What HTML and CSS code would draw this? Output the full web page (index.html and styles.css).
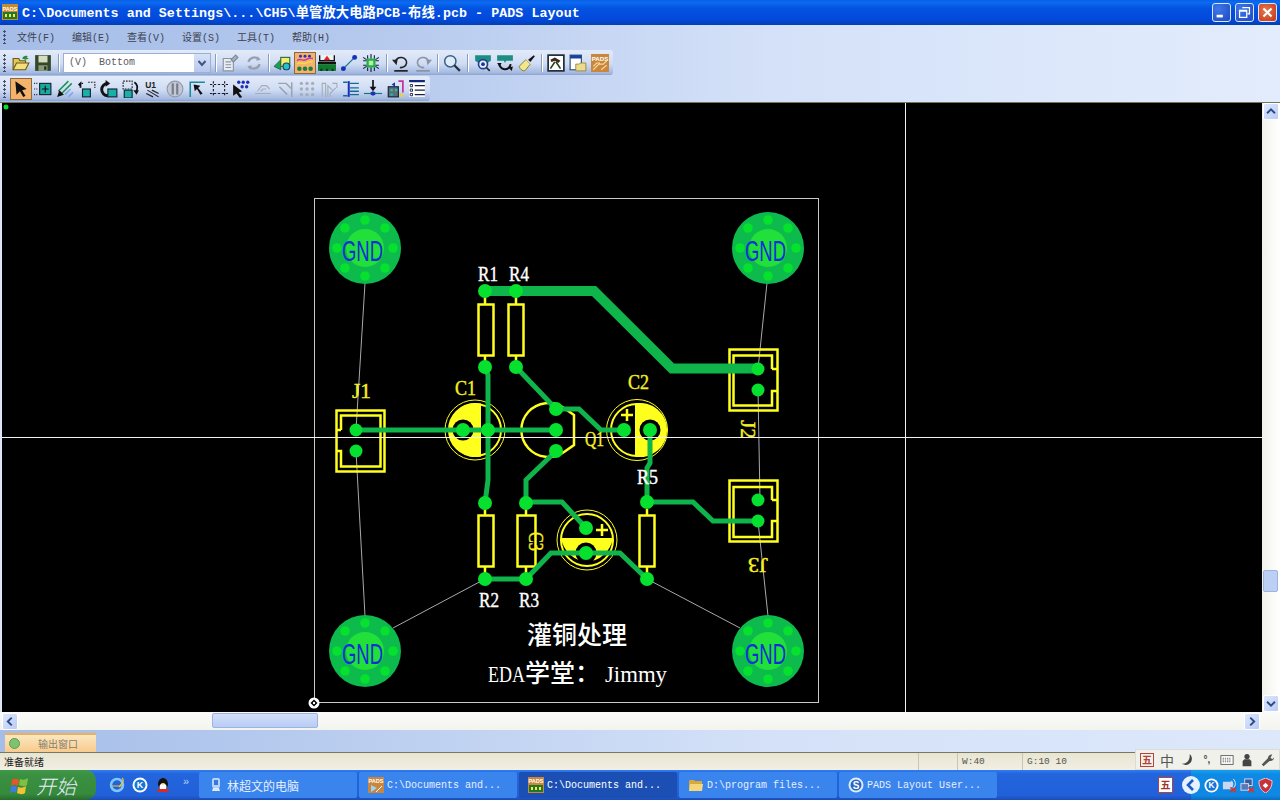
FILE: index.html
```html
<!DOCTYPE html>
<html lang="zh">
<head>
<meta charset="utf-8">
<title>PADS Layout</title>
<link rel="stylesheet" href="styles.css">
</head>
<body>
<div class="app">
  <header class="titlebar">
    <svg class="appicon" viewBox="0 0 16 16"><rect width="16" height="16" fill="#c98a2e"/><rect x="1" y="8" width="14" height="7" fill="#1d7a2a"/><rect x="3" y="10" width="2" height="3" fill="#ffe24a"/><rect x="7" y="10" width="2" height="3" fill="#ffe24a"/><rect x="11" y="10" width="2" height="3" fill="#ffe24a"/><text x="8" y="6.500" class="padsmini">PADS</text></svg>
    <span class="titletext">C:\Documents and Settings\...\CH5\单管放大电路PCB-布线.pcb - PADS Layout</span>
    <div class="winbtns">
      <span class="winbtn"><svg viewBox="0 0 19 19"><rect x="4" y="12" width="7" height="3" fill="#fff"/></svg></span>
      <span class="winbtn"><svg viewBox="0 0 19 19"><path d="M7 4h8v7h-2M4 7h8v8H4z M4 8h8" fill="none" stroke="#fff" stroke-width="1.400"/></svg></span>
      <span class="winbtn close"><svg viewBox="0 0 19 19"><path d="M5 5l9 9M14 5l-9 9" stroke="#fff" stroke-width="2.400"/></svg></span>
    </div>
  </header>

  <div class="chrome">
    <nav class="menubar">
      <i class="grip"></i>
      <span class="menu">文件(F)</span><span class="menu">编辑(E)</span><span class="menu">查看(V)</span><span class="menu">设置(S)</span><span class="menu">工具(T)</span><span class="menu">帮助(H)</span>
    </nav>

    <div class="toolbar tb1">
      <i class="grip"></i>
      <span class="tool"><svg viewBox="0 0 16 16"><path d="M1 14V4h5l1 2h5v2" fill="#e3c65a" stroke="#6b5a18"/><path d="M1 14l3-6h11l-3 6z" fill="#f3df7c" stroke="#6b5a18"/><path d="M9 4c1-2 3-3 5-2l-1 1 2 1-3 1z" fill="#2c8a3a"/></svg></span>
      <span class="tool"><svg viewBox="0 0 16 16"><rect x="1" y="1" width="14" height="14" fill="#33482c"/><rect x="4" y="1.500" width="8" height="6" fill="#d7dcc0"/><rect x="4" y="10" width="8" height="5" fill="#8d9a78"/><rect x="9" y="11" width="2" height="3" fill="#22301c"/></svg></span>
      <i class="sep s9"></i>
      <div class="combo"><span class="combotext">(V)&nbsp; Bottom</span><span class="comboarrow"><svg viewBox="0 0 12 12"><path d="M2.500 4l3.500 4 3.500-4" fill="none" stroke="#44557e" stroke-width="2"/></svg></span></div>
      <i class="sep s8"></i>
      <span class="tool"><svg viewBox="0 0 16 16"><path d="M2 4h9v11H2z" fill="#e8ecf3" stroke="#8b93a3"/><path d="M4 7h5M4 9.500h5M4 12h5" stroke="#8b93a3"/><path d="M9 5l4-4 2 2-4 4z" fill="#aab2c0" stroke="#7e8695"/></svg></span>
      <span class="tool gapl"><svg viewBox="0 0 16 16"><path d="M3 7a5.500 5.500 0 0 1 9.500-2M13 9a5.500 5.500 0 0 1-9.500 2" fill="none" stroke="#98a0ae" stroke-width="2"/><path d="M11 2l3 3-4 1zM5 14l-3-3 4-1z" fill="#98a0ae"/></svg></span>
      <i class="sep s7"></i>
      <span class="tool"><svg viewBox="0 0 16 16"><path d="M0 11l6-6v9z" fill="#14a34b" stroke="#124" stroke-width=".5"/><rect x="6" y="3" width="8" height="8" fill="#f2ee70" stroke="#2a6d3a"/><circle cx="11" cy="11" r="3" fill="#25c0c8" stroke="#146"/></svg></span>
      <span class="tool on"><svg viewBox="0 0 16 16"><g fill="#2b2fb6"><circle cx="4" cy="2" r="1.300"/><circle cx="8" cy="2" r="1.300"/><circle cx="12" cy="2" r="1.300"/></g><path d="M1 6c3-3 5 1 8-1s4-1 6-1" fill="none" stroke="#c23bb5" stroke-width="1.200"/><path d="M1 9c3-3 5 1 8-1s4-1 6-1" fill="none" stroke="#f0e040" stroke-width="1.200"/><g fill="#1c7d3c"><circle cx="3" cy="13" r="2"/><circle cx="8" cy="13" r="2"/><circle cx="13" cy="13" r="2"/></g></svg></span>
      <span class="tool"><svg viewBox="0 0 16 16"><path d="M1.500 1v5h13V1" fill="#eef3f5" stroke="#111" stroke-width="1.200"/><path d="M8 1.500l3 4H5z" fill="#d9262a"/><rect x="0" y="7" width="16" height="2" fill="#111"/><rect x="0" y="9" width="16" height="6" fill="#127a30"/><path d="M2 13h2v2H2zM7 13h2v2H7zM12 13h2v2h-2z" fill="#0d3a1c"/></svg></span>
      <span class="tool"><svg viewBox="0 0 16 16"><path d="M3 13L13 3" stroke="#1f7a96" stroke-width="1.200"/><circle cx="3" cy="13" r="2.200" fill="#1330b8"/><circle cx="13" cy="3" r="2.200" fill="#1330b8"/></svg></span>
      <span class="tool"><svg viewBox="0 0 16 16"><rect x="4" y="4" width="8" height="8" fill="#23b04a"/><path d="M1 3l3 2M1 6h3M1 10h3M1 13l3-2M15 3l-3 2M15 6h-3M15 10h-3M15 13l-3-2M5 1v3M8 0v4M11 1v3M5 15v-3M8 16v-4M11 15v-3" stroke="#13263a"/><path d="M6 6h4v4H6z" fill="#b8f0a0"/></svg></span>
      <i class="sep s8"></i>
      <span class="tool"><svg viewBox="0 0 16 16"><path d="M3 7a5 4.500 0 1 1 4 5" fill="none" stroke="#222" stroke-width="1.400"/><path d="M0 5l5 0-1 5z" fill="#222"/><path d="M2 15h12" stroke="#222" stroke-width="1.500"/></svg></span>
      <span class="tool"><svg viewBox="0 0 16 16"><path d="M13 7a5 4.500 0 1 0-4 5" fill="none" stroke="#8b93a3" stroke-width="1.400"/><path d="M16 5h-5l1 5z" fill="#8b93a3"/><path d="M2 15h12" stroke="#8b93a3" stroke-width="1.500"/></svg></span>
      <i class="sep s7"></i>
      <span class="tool"><svg viewBox="0 0 16 16"><circle cx="6.500" cy="6.500" r="5" fill="#dcecf8" stroke="#3b5f86" stroke-width="1.300"/><path d="M10 10l5 5" stroke="#26303f" stroke-width="2"/></svg></span>
      <i class="sep s9"></i>
      <span class="tool"><svg viewBox="0 0 16 16"><path d="M1 1h14v5l-3 2H4L1 6z" fill="#1c8d83"/><circle cx="8" cy="9" r="4" fill="#e8f2f4" stroke="#24408c" stroke-width="1.500"/><circle cx="8" cy="9" r="1.700" fill="#1c2fb8"/><path d="M11 12l3 3" stroke="#222" stroke-width="1.500"/></svg></span>
      <span class="tool"><svg viewBox="0 0 16 16"><path d="M1 1h14v5h-6L8 8 7 6H1z" fill="#1c8d83"/><path d="M3 8a5 5 0 0 0 10 1" fill="none" stroke="#111" stroke-width="1.800"/><path d="M1 8h4l-2 3zM11 12l4-1-1 4z" fill="#111"/></svg></span>
      <span class="tool"><svg viewBox="0 0 16 16"><path d="M1 11l6-6 4 4-5 6c-2 0-4-1-5-4z" fill="#f2e88a" stroke="#6a6a20" stroke-width=".7"/><path d="M7 5l4 4 1-1-4-4z" fill="#ddd"/><path d="M9 5l5-4 1 1-4 5z" fill="#15161c"/></svg></span>
      <i class="sep s7"></i>
      <span class="tool"><svg viewBox="0 0 16 16"><rect x="1" y="1" width="14" height="14" fill="#fff" stroke="#1d2a38" stroke-width="1.500"/><path d="M3 5l4-2 5 3-2 2-3-2-3 1z" fill="#3b2a1a"/><path d="M7 7l-4 6M8 7l4 6" stroke="#25421f" stroke-width="1.500"/></svg></span>
      <span class="tool"><svg viewBox="0 0 16 16"><rect x="1" y="1" width="10" height="13" fill="#fff" stroke="#25507e"/><rect x="1" y="1" width="10" height="3" fill="#1b3f9c"/><path d="M6 9h3l1-1h5v7H6z" fill="#ecdb8a" stroke="#8a7a30" stroke-width=".7"/></svg></span>
      <span class="tool"><svg viewBox="0 0 16 16"><rect width="16" height="16" fill="#c9863c"/><text x="8" y="6" class="padsmini">PADS</text><path d="M2 14l5-5h4l3-3M2 11l3-3h3M9 14l5-4" stroke="#f5d9a0" fill="none"/></svg></span>
    </div>

    <div class="toolbar tb2">
      <i class="grip"></i>
      <span class="tool on"><svg viewBox="0 0 16 16"><path d="M3 1l10 7-4 1 3 5-2 1-3-5-3 3z" fill="#111"/></svg></span>
      <span class="tool"><svg viewBox="0 0 16 16"><rect x="5" y="3" width="10" height="10" fill="#1aa9a0" stroke="#123"/><path d="M10 5v6M7 8h6" stroke="#111"/><path d="M0 3h4M0 13h4M0 8h3" stroke="#333" stroke-dasharray="1 1"/></svg></span>
      <span class="tool"><svg viewBox="0 0 16 16"><path d="M2 10l9-9M5 12l9-9" stroke="#1c9050" stroke-width="1.300"/><path d="M8 13l5-5M11 15l4-4" stroke="#7aa8e8" stroke-width="1.300"/><path d="M1 15l2-6 4 4z" fill="#111"/></svg></span>
      <span class="tool"><svg viewBox="0 0 16 16"><rect x="4" y="8" width="7" height="7" fill="#1ab0a6" stroke="#123"/><path d="M9 2h6v5M2 7V3h3" fill="none" stroke="#222" stroke-dasharray="1.500 1"/><path d="M0 4l3-3v6z" fill="#111"/></svg></span>
      <span class="tool"><svg viewBox="0 0 16 16"><path d="M7 3a5.500 5.500 0 1 0 0 11" fill="none" stroke="#111" stroke-width="2.600"/><path d="M5 0l4 3-4 3z" fill="#111"/><rect x="7" y="8" width="8" height="7" fill="#1ab0a6" stroke="#123"/></svg></span>
      <span class="tool"><svg viewBox="0 0 16 16"><rect x="1" y="1" width="8" height="7" fill="none" stroke="#222" stroke-dasharray="1.500 1"/><rect x="2" y="9" width="7" height="7" fill="#1ab0a6" stroke="#123"/><path d="M11 2c3 2 3 5 2 8" fill="none" stroke="#111" stroke-width="1.500"/><path d="M10 9h5l-2 4z" fill="#111"/></svg></span>
      <span class="tool"><svg viewBox="0 0 16 16"><text x="1" y="7.500" class="u1">U1</text><path d="M3 9l10 6M2 12l6 3M7 9l6 3" stroke="#222"/></svg></span>
      <span class="tool"><svg viewBox="0 0 16 16"><circle cx="8" cy="8" r="7" fill="#c3c9d4" stroke="#9299a8"/><rect x="5" y="3" width="2" height="10" fill="#777e8e"/><rect x="9" y="3" width="2" height="10" fill="#777e8e"/></svg></span>
      <span class="tool"><svg viewBox="0 0 16 16"><path d="M2 15V2h13" fill="none" stroke="#1a8a98" stroke-width="1.400"/><path d="M5 4l6 1-2 2 4 5-2 1-3-5-2 2z" fill="#111"/></svg></span>
      <span class="tool"><svg viewBox="0 0 16 16"><path d="M3 1v14M13 1v14M0 4h16M0 12h16" stroke="#1a1a26" stroke-dasharray="2 1.500"/></svg></span>
      <span class="tool"><svg viewBox="0 0 16 16"><g fill="#1c2fb8"><circle cx="6" cy="2" r="1.500"/><circle cx="10" cy="2" r="1.500"/><circle cx="14" cy="2" r="1.500"/><circle cx="9" cy="6" r="1.500"/><circle cx="13" cy="6" r="1.500"/></g><path d="M1 4l8 6-3 1 3 4-2 1-3-4-3 2z" fill="#111"/></svg></span>
      <span class="tool"><svg viewBox="0 0 16 16"><path d="M1 12h14M3 10l4-5h4l3 3M6 10l2-2h3" fill="none" stroke="#a6adba"/></svg></span>
      <span class="tool"><svg viewBox="0 0 16 16"><path d="M2 3h7l5 5v7M14 2v13M3 6l7 7" fill="none" stroke="#9aa2b2" stroke-width="1.300"/></svg></span>
      <span class="tool"><svg viewBox="0 0 16 16"><g fill="#a6adba"><circle cx="3" cy="3" r="1.500"/><circle cx="8" cy="3" r="1.500"/><circle cx="13" cy="3" r="1.500"/><circle cx="3" cy="8" r="1.500"/><circle cx="8" cy="8" r="1.500"/><circle cx="13" cy="8" r="1.500"/><circle cx="3" cy="13" r="1.500"/><circle cx="8" cy="13" r="1.500"/><circle cx="13" cy="13" r="1.500"/></g></svg></span>
      <span class="tool"><svg viewBox="0 0 16 16"><path d="M2 15V3h3v12M7 15V5l4 4M9 15v-3l5-5M11 3h4v4" fill="none" stroke="#a6adba"/></svg></span>
      <span class="tool"><svg viewBox="0 0 16 16"><path d="M6 1v14" stroke="#1c2fb8" stroke-width="1.800"/><path d="M1 2h4M1 14h4M7 3h8M7 7h8M7 10h8M7 13h8" stroke="#146c96" stroke-width="1.200"/></svg></span>
      <span class="tool"><svg viewBox="0 0 16 16"><path d="M8 0v7" stroke="#111" stroke-width="1.500"/><path d="M5 6h6l-3 4z" fill="#111"/><path d="M0 12h16" stroke="#147080"/><path d="M8 10v4M6 11l4 2M10 11l-4 2" stroke="#1c2fb8" stroke-width="1.300"/></svg></span>
      <span class="tool"><svg viewBox="0 0 16 16"><rect x="2" y="6" width="9" height="9" fill="#5c6e76" stroke="#182030"/><path d="M4 8h2v2H4zM8 8h2v2H8zM4 12h2v2H4z" fill="#21c0b5"/><path d="M11 1h4v10" fill="none" stroke="#c42f9a" stroke-width="1.500"/><path d="M8 2l-3 2 3 2z" fill="#1c2fb8"/><path d="M12 12h3v3h-3z" fill="#e8d040"/></svg></span>
      <span class="tool"><svg viewBox="0 0 16 16"><rect x="1" y="1" width="14" height="14" fill="#fff"/><rect x="1" y="0" width="14" height="2" fill="#102a78"/><path d="M6 5h9M6 9h9M6 13h9" stroke="#182040"/><path d="M2 4h2v2H2zM2 8h2v2H2zM2 12h2v2H2z" fill="none" stroke="#182040" stroke-width=".8"/></svg></span>
    </div>
  </div>

  <main class="workarea">
    <div class="canvas">
      <svg class="board" viewBox="2 103 1260 609" preserveAspectRatio="none">
        <rect x="2" y="103" width="1260" height="609" fill="#000"/>
        <circle cx="6" cy="107" r="2.500" class="pad"/>
        <rect x="314.500" y="198.500" width="504" height="504" class="outline"/>

        <!-- ratsnest -->
        <path class="rat" d="M365 283L356 430M356 451L365 616M767 283L758 369M758 390L760 500M758 521L768 616M485 579L393 628M647 579L740 628"/>

        <!-- mounting holes -->
        <g id="hole">
          <circle cx="365" cy="248" r="36" class="mask"/>
          <circle cx="365" cy="248" r="19" class="holecore"/>
          <g class="pad">
            <circle cx="365" cy="220" r="4.800"/><circle cx="385" cy="228" r="4.800"/><circle cx="393" cy="248" r="4.800"/><circle cx="385" cy="268" r="4.800"/><circle cx="365" cy="276" r="4.800"/><circle cx="345" cy="268" r="4.800"/><circle cx="337" cy="248" r="4.800"/><circle cx="345" cy="228" r="4.800"/>
          </g>
        </g>
        <use href="#hole" x="403" y="0"/>
        <use href="#hole" x="0" y="403"/>
        <use href="#hole" x="403" y="403"/>
        <text class="gnd" x="342" y="261" textLength="41" lengthAdjust="spacingAndGlyphs">GND</text>
        <text class="gnd" x="745" y="261" textLength="41" lengthAdjust="spacingAndGlyphs">GND</text>
        <text class="gnd" x="342" y="664" textLength="41" lengthAdjust="spacingAndGlyphs">GND</text>
        <text class="gnd" x="745" y="664" textLength="41" lengthAdjust="spacingAndGlyphs">GND</text>

        <!-- silkscreen -->
        <g class="silk">
          <path d="M485 297V304M485 355V361M516 297V304M516 355V361M485 509V515M485 567V573M526 509V515M526 567V573M647 509V515M647 567V573"/>
          <rect x="478.500" y="304.500" width="15" height="51"/>
          <rect x="508.500" y="304.500" width="15" height="51"/>
          <rect x="478.500" y="515.500" width="15" height="51"/>
          <rect x="517.500" y="515.500" width="18" height="51"/>
          <rect x="639.500" y="515.500" width="15" height="51"/>
          <!-- J1 -->
          <rect x="336.500" y="410.500" width="48" height="61"/>
          <path d="M341 430V415.500H380.500V466.500H341V451H337M341 430H337"/>
          <!-- J2 -->
          <rect x="729.500" y="349.500" width="48" height="61"/>
          <path d="M772 369V355.500H733.500V405.500H772V391H777M772 369H777"/>
          <!-- J3 -->
          <rect x="729.500" y="480.500" width="48" height="61"/>
          <path d="M772 500V487H733.500V537H772V521H777M772 500H777"/>
          <!-- Q1 -->
          <path d="M574 415L564 408A27 27 0 1 0 564 452L574 445Z"/>
        </g>

        <!-- capacitors -->
        <g class="cap">
          <circle cx="475" cy="430" r="30" class="ring"/>
          <path d="M481 403.500A27 27 0 1 0 481 456.500Z" class="capfill"/>
          <circle cx="475" cy="430" r="26" class="ring2"/>
          <circle cx="463" cy="430" r="10.500" class="halo"/>

          <circle cx="637" cy="430" r="30.500" class="ring"/>
          <path d="M635 403.500A27 27 0 1 1 635 456.500Z" class="capfill"/>
          <circle cx="637" cy="430" r="26" class="ring2"/>
          <circle cx="650" cy="430" r="10.500" class="halo"/>
          <path d="M627 409v12M621 415h12" class="plus"/>

          <circle cx="587" cy="540" r="30" class="ring"/>
          <path d="M561 538H613A26.500 29 0 0 1 561 538Z" class="capfill"/>
          <circle cx="587" cy="540" r="26" class="ring2"/>
          <circle cx="586" cy="553" r="10.500" class="halo"/>
          <path d="M602 524v12M596 530h12" class="plus"/>
        </g>

        <!-- traces -->
        <path class="trace wide" d="M485 291H594L672 368.500H758"/>
        <g class="trace">
          <path d="M356 430H556"/>
          <path d="M485 367L488 375V480L485 503"/>
          <path d="M516 367L556 409H579L601 430H624"/>
          <path d="M556 451L526 480V503"/>
          <path d="M526 502H562L586 528"/>
          <path d="M485 579H526L551 553H620L647 579"/>
          <path d="M650 430V463L647 468V503"/>
          <path d="M647 502H693L713 521H758"/>
        </g>

        <!-- pads -->
        <g class="pad">
          <circle cx="485" cy="291" r="7"/><circle cx="516" cy="291" r="7"/>
          <circle cx="485" cy="367" r="7"/><circle cx="516" cy="367" r="7"/>
          <circle cx="356" cy="430" r="6.500"/><circle cx="356" cy="451" r="6.500"/>
          <circle cx="463" cy="430" r="7"/><circle cx="488" cy="430" r="7"/>
          <circle cx="556" cy="409" r="7"/><circle cx="556" cy="430" r="7"/><circle cx="556" cy="451" r="7"/>
          <circle cx="624" cy="430" r="7"/><circle cx="650" cy="430" r="7"/>
          <circle cx="758" cy="369" r="6.500"/><circle cx="758" cy="390" r="6.500"/>
          <circle cx="758" cy="500" r="6.500"/><circle cx="758" cy="521" r="6.500"/>
          <circle cx="485" cy="503" r="7"/><circle cx="526" cy="503" r="7"/><circle cx="647" cy="502" r="7"/>
          <circle cx="485" cy="579" r="7"/><circle cx="526" cy="579" r="7"/><circle cx="647" cy="579" r="7"/>
          <circle cx="586" cy="528" r="7"/><circle cx="586" cy="553" r="7"/>
        </g>

        <!-- labels -->
        <text class="lbl white" x="478" y="281" textLength="20" lengthAdjust="spacingAndGlyphs">R1</text>
        <text class="lbl white" x="509" y="281" textLength="20" lengthAdjust="spacingAndGlyphs">R4</text>
        <text class="lbl white" x="479" y="607" textLength="20" lengthAdjust="spacingAndGlyphs">R2</text>
        <text class="lbl white" x="519" y="607" textLength="20" lengthAdjust="spacingAndGlyphs">R3</text>
        <text class="lbl white" x="637" y="484" textLength="21" lengthAdjust="spacingAndGlyphs">R5</text>
        <text class="lbl yellow" x="352" y="398" textLength="19" lengthAdjust="spacingAndGlyphs">J1</text>
        <text class="lbl yellow" x="455" y="395" textLength="21" lengthAdjust="spacingAndGlyphs">C1</text>
        <text class="lbl yellow" x="628" y="389" textLength="21" lengthAdjust="spacingAndGlyphs">C2</text>
        <text class="lbl yellow" x="585" y="446" textLength="19" lengthAdjust="spacingAndGlyphs">Q1</text>
        <text class="lbl yellow" transform="translate(741 420) rotate(90)" textLength="19" lengthAdjust="spacingAndGlyphs">J2</text>
        <text class="lbl yellow" transform="translate(768 558) rotate(180)" textLength="20" lengthAdjust="spacingAndGlyphs">J3</text>
        <text class="lbl yellow" transform="translate(529 532) rotate(90)" textLength="19" lengthAdjust="spacingAndGlyphs">C3</text>
        <text class="cjklbl" x="527" y="644">灌铜处理</text>
        <text class="ser" x="488" y="682" textLength="37" lengthAdjust="spacingAndGlyphs">EDA</text>
        <text class="cjklbl" x="525" y="682">学堂：</text>
        <text class="ser" x="605" y="682" textLength="62" lengthAdjust="spacingAndGlyphs">Jimmy</text>

        <!-- cursor -->
        <path class="cross" d="M905.500 103V712M2 437.500H1262"/>
        <g>
          <circle cx="314" cy="703" r="5.500" fill="#fff"/>
          <path d="M314 699.500l3.500 3.500-3.500 3.500-3.500-3.500z" fill="#000"/>
          <circle cx="314" cy="703" r="1.200" fill="#fff"/>
        </g>
      </svg>
    </div>
    <div class="vscroll">
      <span class="sbtn"><svg viewBox="0 0 16 16"><path d="M3.500 10L8 5.500 12.500 10" fill="none" stroke="#2d4a86" stroke-width="2.200"/></svg></span>
      <div class="vtrack"><span class="vthumb"></span></div>
      <span class="sbtn"><svg viewBox="0 0 16 16"><path d="M3.500 6L8 10.500 12.500 6" fill="none" stroke="#2d4a86" stroke-width="2.200"/></svg></span>
    </div>
  </main>

  <div class="hscroll">
    <span class="sbtn"><svg viewBox="0 0 16 16"><path d="M10 3.500L5.500 8 10 12.500" fill="none" stroke="#2d4a86" stroke-width="2.200"/></svg></span>
    <div class="htrack"><span class="hthumb"></span></div>
    <span class="sbtn"><svg viewBox="0 0 16 16"><path d="M6 3.500L10.500 8 6 12.500" fill="none" stroke="#2d4a86" stroke-width="2.200"/></svg></span>
  </div>

  <div class="outputbar">
    <div class="outtab"><i class="outdot"></i><span>输出窗口</span></div>
  </div>

  <div class="statusbar">
    <span class="st-main">准备就绪</span>
    <span class="st-cell c1"></span>
    <span class="st-cell c2">W:40</span>
    <span class="st-cell c3">G:10 10</span>
    <div class="ime">
      <span class="ime-wu">五</span>
      <span class="ime-zh">中</span>
      <svg viewBox="0 0 16 16"><path d="M11 1a7 7 0 1 1-9 11c5 1 10-3 9-11z" fill="#444"/></svg>
      <span class="ime-dots">°,</span>
      <svg viewBox="0 0 16 16"><rect x="1" y="3" width="14" height="10" fill="#fff" stroke="#555"/><path d="M3 6h10M3 8h10M3 10h10" stroke="#555" stroke-dasharray="1.500 1"/></svg>
      <svg viewBox="0 0 16 16"><circle cx="8" cy="4" r="3" fill="#444"/><path d="M3 15V9l2-2h6l2 2v6z" fill="#444"/></svg>
      <svg viewBox="0 0 16 16"><path d="M2 13l7-7a4 4 0 0 1 5-4l-2 3 2 2 2-2a4 4 0 0 1-5 4l-7 6z" fill="#555"/></svg>
    </div>
  </div>

  <footer class="taskbar">
    <div class="start">
      <svg class="flag" viewBox="0 0 20 20"><path d="M2 5c3-2 5-1 7 0l-1 6c-2-1-4-2-7 0z" fill="#e8552a"/><path d="M10 4c3 1 5 1 8-1l-1 7c-3 2-5 1-8 0z" fill="#7cc242"/><path d="M1 12c3-2 5-1 6 0l-1 6c-2-1-4-2-6 0z" fill="#3c7ee0"/><path d="M8 12c3 1 5 1 8-1l-1 7c-3 2-5 1-8 0z" fill="#f4c430"/></svg>
      <span class="starttext">开始</span>
    </div>
    <div class="quick">
      <svg viewBox="0 0 16 16"><circle cx="8" cy="8" r="6" fill="none" stroke="#7fc8ff" stroke-width="2.500"/><path d="M3 9h10M13 1c2 1 2 4-3 9" stroke="#f4c430" stroke-width="1.200" fill="none"/></svg>
      <svg viewBox="0 0 16 16"><circle cx="8" cy="8" r="7.500" fill="#fff"/><circle cx="8" cy="8" r="5.500" fill="#1376d8"/><text x="8" y="11" class="kmini">K</text></svg>
      <svg viewBox="0 0 16 16"><ellipse cx="8" cy="7" rx="5" ry="6" fill="#111"/><ellipse cx="8" cy="10" rx="3.500" ry="3.500" fill="#fff"/><path d="M3 12h10l1 3H2z" fill="#d92b22"/><path d="M6 6h4l-2 2z" fill="#f4c430"/></svg>
      <span class="more">»</span>
    </div>
    <div class="task ltask"><svg viewBox="0 0 16 16"><rect x="4" y="1" width="8" height="10" rx="2" fill="#b4d2ff"/><path d="M5 11l-1 3h8l-1-3z" fill="#dfe8f8"/><rect x="6" y="3" width="4" height="5" fill="#3a78d8"/></svg><span class="tasktext cjk">林超文的电脑</span></div>
    <div class="task"><svg viewBox="0 0 16 16"><rect width="16" height="16" fill="#c9863c"/><text x="8" y="6" class="padsmini">PADS</text><path d="M3 8l6 3-6 4z" fill="#9bd2f5"/><path d="M8 15l6-6" stroke="#fff"/></svg><span class="tasktext">C:\Documents and...</span></div>
    <div class="task active"><svg viewBox="0 0 16 16"><rect width="16" height="16" fill="#c9863c"/><text x="8" y="6" class="padsmini">PADS</text><rect x="1" y="8" width="14" height="7" fill="#1d7a2a"/><rect x="3" y="10" width="2" height="3" fill="#ffe24a"/><rect x="7" y="10" width="2" height="3" fill="#ffe24a"/><rect x="11" y="10" width="2" height="3" fill="#ffe24a"/></svg><span class="tasktext">C:\Documents and...</span></div>
    <div class="task"><svg viewBox="0 0 16 16"><path d="M1 14V4l1-1h4l1 1h7v10z" fill="#d8a93a"/><path d="M1 14l1-7h13l-1 7z" fill="#f6d67a"/></svg><span class="tasktext">D:\program files...</span></div>
    <div class="task"><svg viewBox="0 0 16 16"><circle cx="8" cy="8" r="7.500" fill="#dcecfb"/><circle cx="8" cy="8" r="5.500" fill="#2a66c0"/><text x="8" y="11.500" class="smini">S</text></svg><span class="tasktext">PADS Layout User...</span></div>
    <span class="wu-task">五</span>
    <div class="tray">
      <svg class="trayback" viewBox="0 0 20 20"><circle cx="10" cy="10" r="9" fill="#e6f1ff"/><path d="M12 5l-5 5 5 5" fill="none" stroke="#1a5cc4" stroke-width="2.600"/></svg>
      <svg viewBox="0 0 16 16"><circle cx="8" cy="8" r="7.500" fill="#fff"/><circle cx="8" cy="8" r="5.500" fill="#1376d8"/><text x="8" y="11" class="kmini">K</text></svg>
      <svg viewBox="0 0 16 16"><rect x="1" y="4" width="10" height="8" fill="#c9d8f0"/><path d="M10 3c2 2 2 5 0 7M12 1c3 3 3 7 0 10" stroke="#e8f0ff" fill="none"/><path d="M9 10l6 5M15 10l-6 5" stroke="#d9332a" stroke-width="1.800"/></svg>
      <svg viewBox="0 0 16 16"><rect x="5" y="1" width="8" height="7" fill="#3a5aa0" stroke="#d0dcf0"/><rect x="1" y="6" width="8" height="7" fill="#5b76b8" stroke="#d0dcf0"/><path d="M9 10l6 5M15 10l-6 5" stroke="#d9332a" stroke-width="1.800"/></svg>
      <svg viewBox="0 0 16 16"><path d="M8 0l7 3c0 6-2 10-7 13C3 13 1 9 1 3z" fill="#c8303a" stroke="#f4d0d0"/><path d="M5 8l3-3 3 3-3 3z" fill="#fff"/></svg>
    </div>
  </footer>
</div>
</body>
</html>
```

FILE: styles.css
```css
* { box-sizing: border-box; }
html, body { margin: 0; padding: 0; }
body { width: 1280px; height: 800px; overflow: hidden; font-family: "Liberation Mono", "Noto Sans CJK SC", monospace; }
.app { display: flex; flex-direction: column; width: 1280px; height: 800px; }
i { display: block; font-style: normal; }
svg { display: block; }

/* title bar */
.titlebar { height: 25px; flex: none; display: flex; align-items: center; padding: 0 3px 3px 2px; color: #fff;
  background: linear-gradient(#0a5fe6 0, #0a6af0 10%, #0352e0 35%, #0349dd 75%, #0240b4 100%); }
.appicon { width: 16px; height: 16px; margin: 2px 4px 0 0; }
.padsmini { font: bold 5.500px "Liberation Sans", sans-serif; fill: #fff; text-anchor: middle; }
.titletext { font: bold 13.330px "Liberation Mono", "Noto Sans CJK SC", monospace; letter-spacing: .05px; white-space: nowrap; flex: 1; }
.winbtns { display: flex; gap: 4px; margin-top: 3px; }
.winbtn { width: 19px; height: 19px; border: 1px solid #dce6fa; border-radius: 3px;
  background: radial-gradient(circle at 30% 30%, #3f78ea, #2552c8 80%); }
.winbtn.close { background: radial-gradient(circle at 40% 40%, #e87a50, #c8421e 80%); }
.winbtn svg { width: 17px; height: 17px; }

/* menu + toolbars */
.chrome { height: 78px; flex: none; background: linear-gradient(90deg, #a5bde8 0, #b6caee 30%, #d4e1f8 60%, #e2ecfc 100%); border-bottom: 1px solid #76765e; }
.menubar { height: 23px; display: flex; align-items: center; padding-left: 3px; }
.menubar .grip { height: 14px; margin-right: 11px; }
.menu { width: 38px; margin-right: 17px; font-size: 10px; color: #3c4250; white-space: nowrap; }
.grip { width: 3px; height: 18px; flex: none; background: radial-gradient(circle at 1.500px 1.500px, #44506a 1px, transparent 1.300px) 0 0 / 3px 4px; }
.toolbar { display: flex; align-items: center; height: 25px; padding: 0 2px 0 3px; border-radius: 0 3px 3px 0;
  background: linear-gradient(#e3ebf9, #cfdcf3 55%, #a4b9e0 92%, #8ea2c8); }
.toolbar .grip { margin-right: 4px; }
.tb1 { width: 613px; margin-top: 2px; }
.tb2 { width: 430px; margin-top: 1px; }
.tool { width: 22px; height: 22px; flex: none; display: flex; align-items: center; justify-content: center; }
.tool svg { width: 18px; height: 18px; }
.tool.gapl { margin-left: 2px; }
.tool.on { background: #f5b26a; border: 1px solid #8a6a44; }
.sep { height: 18px; flex: none; }
.sep::after { content: ""; display: block; width: 1px; height: 18px; margin: 0 auto; background: #8a9cbc; box-shadow: 1px 0 0 #fff; }
.s7 { width: 7px; } .s8 { width: 8px; } .s9 { width: 9px; }
.combo { width: 148px; height: 20px; flex: none; display: flex; align-items: center; justify-content: space-between; background: #fff; border: 1px solid #9db0d2; }
.combotext { font-size: 10px; color: #5a5a60; padding-left: 5px; white-space: pre; }
.comboarrow { width: 16px; height: 18px; display: flex; align-items: center; justify-content: center; background: linear-gradient(#d6e2f8, #b6c8ee); }
.comboarrow svg { width: 12px; height: 12px; }
.u1 { font: bold 7.500px "Liberation Sans", sans-serif; fill: #222; }

/* canvas */
.workarea { height: 609px; flex: none; display: flex; }
.canvas { width: 1262px; height: 609px; flex: none; padding-left: 2px; background: #dfe7f7; }
.board { width: 1260px; height: 609px; }
.outline { fill: none; stroke: #c9c9c9; stroke-width: 1; }
.rat { fill: none; stroke: #a8a8b0; stroke-width: 1; }
.mask { fill: #0dba4c; }
.holecore { fill: #22e03a; }
.pad { fill: #06e02e; }
.silk { fill: none; stroke: #ffff1e; stroke-width: 2.500; }
.ring { fill: none; stroke: #ffff1e; stroke-width: 1; }
.ring2 { fill: none; stroke: #ffff1e; stroke-width: 2; }
.capfill { fill: #ffff1e; }
.halo { fill: #000; }
.plus { fill: none; stroke: #ffff1e; stroke-width: 2.500; }
.trace { fill: none; stroke: #0fb44b; stroke-width: 5; }
.trace.wide { stroke-width: 10; }
.gnd { font: 30px "Liberation Sans", sans-serif; fill: #0a2fd8; }
.lbl { font: 20px "Liberation Serif", serif; stroke-width: .4; }
.white { fill: #fff; stroke: #fff; }
.yellow { fill: #f6f020; stroke: #f6f020; }
.cjklbl { font: 500 25px "Noto Sans CJK SC", sans-serif; fill: #fff; }
.ser { font: 24px "Liberation Serif", serif; fill: #fff; }
.cross { fill: none; stroke: #f2f2f2; stroke-width: 1; }

/* scrollbars */
.vscroll { width: 18px; flex: none; display: flex; flex-direction: column; align-items: center; background: linear-gradient(90deg, #f2f2ec, #fff); }
.sbtn { width: 16px; height: 17px; flex: none; border: 1px solid #fff; border-radius: 2px; background: linear-gradient(135deg, #dde7fc, #b9ccf6); }
.sbtn svg { width: 14px; height: 15px; }
.vtrack { flex: 1; width: 100%; display: flex; flex-direction: column; padding-top: 450px; }
.vthumb { width: 15px; height: 22px; margin-left: 1px; background: #bcd0f5; border: 1px solid #9db4e0; border-radius: 2px; }
.hscroll { height: 18px; flex: none; display: flex; align-items: center; padding: 0 20px 0 2px; background: linear-gradient(#fafafa, #f4f4ee); }
.htrack { flex: 1; height: 100%; padding: 1px 0 0 194px; }
.hthumb { display: block; width: 106px; height: 15px; border: 1px solid #9db4e0; border-radius: 2px; background: linear-gradient(#d2dffa, #b9ccf6); }

/* output */
.outputbar { height: 23px; flex: none; display: flex; align-items: flex-end; padding-left: 5px; background: linear-gradient(90deg, #a5bde8 0, #bccff0 30%, #d4e1f8 60%, #dde8fb 100%); border-bottom: 1px solid #77785f; }
.outtab { width: 91px; height: 19px; display: flex; align-items: center; gap: 18px; padding-left: 4px; background: linear-gradient(#fbe7bf, #f8cb8d); border-top: 2px solid #eab060; }
.outdot { width: 11px; height: 11px; flex: none; border-radius: 50%; background: #7ec46a; border: 1px solid #5d9a64; }
.outtab span { font: 10px "Noto Sans CJK SC", sans-serif; color: #85806e; white-space: nowrap; }

/* status */
.statusbar { height: 17px; flex: none; position: relative; display: flex; align-items: center; background: linear-gradient(#e8e5d2, #f1efe4); font-size: 9.500px; color: #55554a; }
.st-main { width: 918px; padding-left: 4px; font: 10px "Noto Sans CJK SC", sans-serif; color: #222; }
.st-cell { height: 100%; line-height: 17px; border-left: 1px solid #c8c5b0; padding-left: 4px; }
.c1 { width: 39px; }
.c2 { width: 65px; }
.c3 { width: 90px; }
.ime { position: absolute; left: 1135px; top: -4px; width: 145px; height: 21px; display: flex; align-items: center; gap: 6px; padding-left: 4px; background: #f1f1ec; border: 1px solid #dcdcd2; color: #444; }
.ime svg { width: 14px; height: 14px; flex: none; }
.ime-wu { width: 14px; height: 14px; border: 1px solid #b5433a; color: #b5433a; font: bold 10px/12px "Noto Sans CJK SC", sans-serif; text-align: center; flex: none; }
.ime-zh { font: 14px/16px "Noto Sans CJK SC", sans-serif; color: #555; flex: none; }
.ime-dots { width: 14px; font: bold 10px "Liberation Sans", sans-serif; text-align: center; flex: none; }

/* taskbar */
.taskbar { height: 30px; flex: none; display: flex; align-items: center; background: linear-gradient(#2f7df0 0, #2365dd 12%, #2160d8 85%, #1a4cb8 100%); }
.start { width: 96px; height: 30px; flex: none; display: flex; align-items: center; padding-left: 10px; gap: 6px; border-radius: 0 10px 10px 0; background: linear-gradient(#3f9a48, #3a8f40 20%, #358a3c 80%, #276b2e); }
.flag { width: 20px; height: 20px; }
.starttext { font: italic 300 20px "Noto Sans CJK SC", sans-serif; color: #eef; }
.quick { width: 103px; flex: none; display: flex; align-items: center; gap: 7px; padding-left: 13px; }
.quick svg { width: 16px; height: 16px; flex: none; }
.more { color: #bcd2f8; font: 11px "Liberation Sans", sans-serif; margin: -8px 0 0 5px; }
.task { width: 158px; height: 26px; margin-right: 2px; flex: none; display: flex; align-items: center; gap: 3px; padding-left: 9px; border-radius: 2px; background: #3a84ee; color: #e6efff; }
.task svg { width: 16px; height: 16px; flex: none; }
.task.active { background: #1b4fb4; color: #fff; }
.tasktext { font-size: 10px; white-space: nowrap; }
.tasktext.cjk { font: 12px "Noto Sans CJK SC", sans-serif; }
.wu-task { width: 15px; height: 16px; margin-left: 159px; flex: none; background: #fff; border: 1px solid #b5433a; color: #a0342a; font: bold 10px/14px "Noto Sans CJK SC", sans-serif; text-align: center; }
.tray { flex: 1; height: 30px; margin-left: 18px; display: flex; align-items: center; gap: 3px; background: linear-gradient(#18a0f0, #0f8ae4 15%, #0e88e2 85%, #0a6cc4); }
.tray svg { width: 15px; height: 15px; flex: none; }
.tray .trayback { width: 20px; height: 20px; margin-left: -10px; }
.kmini { font: bold 9px "Liberation Sans", sans-serif; fill: #fff; text-anchor: middle; }
.smini { font: bold 10px "Liberation Sans", sans-serif; fill: #fff; text-anchor: middle; }
```
